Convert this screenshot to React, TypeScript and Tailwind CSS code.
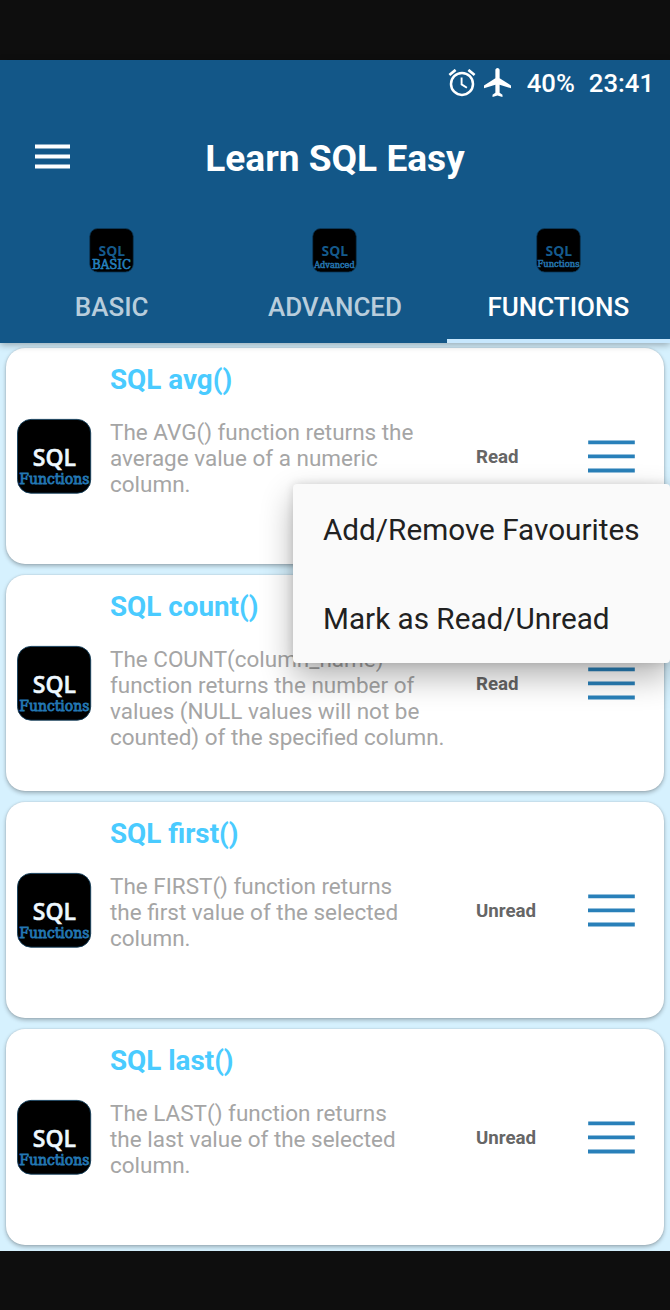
type Topic = { title: string; lines: string[]; status: 'Read' | 'Unread' };

const topics: Topic[] = [
  {
    title: 'SQL avg()',
    lines: ['The AVG() function returns the', 'average value of a numeric', 'column.'],
    status: 'Read',
  },
  {
    title: 'SQL count()',
    lines: [
      'The COUNT(column_name)',
      'function returns the number of',
      'values (NULL values will not be',
      'counted) of the specified column.',
    ],
    status: 'Read',
  },
  {
    title: 'SQL first()',
    lines: ['The FIRST() function returns', 'the first value of the selected', 'column.'],
    status: 'Unread',
  },
  {
    title: 'SQL last()',
    lines: ['The LAST() function returns', 'the last value of the selected', 'column.'],
    status: 'Unread',
  },
];

const tabs = [
  { label: 'BASIC', badge: 'BASIC', size: 12.4, width: 39, x: 3, y: 41, fill: '#2580bd', active: false },
  { label: 'ADVANCED', badge: 'Advanced', size: 8.6, width: 40.5, x: 2.2, y: 39.6, fill: '#2370a8', active: false },
  { label: 'FUNCTIONS', badge: 'Functions', size: 8.8, width: 42, x: 1.5, y: 38.8, fill: '#2370a8', active: true },
];

function AlarmIcon() {
  return (
    <svg className="h-7 w-7" viewBox="0 0 28 28" fill="none" stroke="white">
      <circle cx="14" cy="14.9" r="11" strokeWidth="2.5" />
      <path d="M13.6 8.4v7l5.3 3.4" strokeWidth="1.9" />
      <path d="M1.4 6 7.6 0.9M26.6 6 20.4 0.9" strokeWidth="2.7" />
    </svg>
  );
}

function PlaneIcon() {
  return (
    <svg className="-mt-px h-[29px] w-[27px]" viewBox="2 2 19 20" preserveAspectRatio="none" fill="white">
      <path d="M21 16v-2l-8-5V3.5c0-.83-.67-1.5-1.5-1.5S10 2.67 10 3.5V9l-8 5v2l8-2.5V19l-2 1.5V22l3.5-1 3.5 1v-1.5L13 19v-5.5l8 2.5z" />
    </svg>
  );
}

function TabBadge({ tab }: { tab: (typeof tabs)[number] }) {
  return (
    <svg className="h-[45px] w-[45px] overflow-visible" viewBox="0 0 45 45">
      <rect x="0.7" y="0.5" width="43.6" height="43.6" rx="8" fill="black" stroke="#0b3a5c" strokeWidth="0.8" />
      <text x="9.6" y="28" fontFamily="Open Sans" fontWeight="700" fontSize="14.4" fill="#155a8c" textLength="26.5" lengthAdjust="spacingAndGlyphs">
        SQL
      </text>
      <text x={tab.x} y={tab.y} fontFamily="DejaVu Serif" fontSize={tab.size} fill={tab.fill} stroke={tab.fill} strokeWidth="0.6" textLength={tab.width} lengthAdjust="spacingAndGlyphs">
        {tab.badge}
      </text>
    </svg>
  );
}

function TopicBadge() {
  return (
    <svg className="h-[75px] w-[75px] shrink-0 overflow-visible" viewBox="0 0 75 75">
      <rect x="0.5" y="0.4" width="73.2" height="73.8" rx="13.5" fill="black" stroke="#123f5e" strokeWidth="0.9" />
      <text x="15.8" y="46.6" fontFamily="Open Sans" fontWeight="600" fontSize="24" fill="#eef8ff" stroke="#eef8ff" strokeWidth="0.55" textLength="43.2" lengthAdjust="spacingAndGlyphs">
        SQL
      </text>
      <text x="2.2" y="64.6" fontFamily="DejaVu Serif" fontSize="14.2" fill="#2377b3" stroke="#2377b3" strokeWidth="0.8" textLength="70.2" lengthAdjust="spacingAndGlyphs">
        Functions
      </text>
    </svg>
  );
}

function TopicCard({ topic }: { topic: Topic }) {
  return (
    <article className="flex h-[216px] items-center rounded-[19px] bg-white pl-[11px] shadow-[0_2px_4px_rgba(0,0,0,0.28),0_0_2px_rgba(0,0,0,0.14)]">
      <TopicBadge />
      <div className="ml-[18px] h-full w-[366px] shrink-0 pt-4">
        <h2 className="text-[27.8px] leading-8 font-bold text-[#4acbff]">{topic.title}</h2>
        <p className="mt-[23px] text-[22.47px] leading-[26px] whitespace-nowrap text-[#a5a5a5]">
          {topic.lines.map((line) => (
            <span className="block" key={line}>
              {line}
            </span>
          ))}
        </p>
      </div>
      <span className="mt-0.5 w-28 text-[18.7px] leading-6 font-bold text-[#666]">{topic.status}</span>
      <svg className="h-[34px] w-[47px]" viewBox="0 0 47 34">
        <path d="M0.2 3.3h46.6M0 17.4h46.8M0 31.5h46.8" stroke="#2980b9" strokeWidth="3.8" />
      </svg>
    </article>
  );
}

export default function App() {
  return (
    <div className="relative flex h-[1310px] w-[670px] flex-col overflow-hidden bg-[#0e0e0e] pt-[60px] font-['Roboto',sans-serif]">
      <header className="relative z-10 flex h-[283px] shrink-0 flex-col bg-[#135788] text-white shadow-[0_2px_7px_rgba(0,0,0,0.3)]">
        <div className="flex h-[46px] items-center justify-end pr-4 text-[26px] font-medium">
          <AlarmIcon />
          <span className="ml-2 flex">
            <PlaneIcon />
          </span>
          <span className="ml-4 text-[25.7px]">40%</span>
          <span className="ml-3.5 text-[25.7px]">23:41</span>
        </div>
        <div className="grid h-[104px] grid-cols-[1fr_auto_1fr] items-center">
          <svg className="ml-[35px] h-[25px] w-[35px] -translate-y-0.5" viewBox="0 0 35 25">
            <path d="M0 2.5h35M0 12.5h35M0 22.5h35" stroke="white" strokeWidth="4" />
          </svg>
          <h1 className="pt-0.5 text-[37.1px] leading-[44px] font-bold">Learn SQL Easy</h1>
        </div>
        <nav className="grid flex-1 grid-cols-3">
          {tabs.map((tab) => (
            <div
              key={tab.label}
              className={
                tab.active
                  ? 'flex flex-col items-center border-b-4 border-[#c7e7fd] pt-[18px] text-white'
                  : 'flex flex-col items-center border-b-4 border-transparent pt-[18px] text-[#b8cddc]'
              }
            >
              <TabBadge tab={tab} />
              <span className="mt-[18px] text-[26px] leading-8 font-medium">{tab.label}</span>
            </div>
          ))}
        </nav>
      </header>
      <main className="flex h-[908px] shrink-0 flex-col gap-[11px] overflow-hidden bg-[#d6f1fe] px-1.5 pt-[5px]">
        {topics.map((topic) => (
          <TopicCard key={topic.title} topic={topic} />
        ))}
      </main>
      <div className="absolute top-[484px] left-[293px] z-20 flex h-[179px] w-[377px] flex-col rounded-[4px] bg-[#fafafa] px-[30px] pt-px text-[29.7px] text-[#212121] shadow-[0_14px_32px_rgba(0,0,0,0.3),0_0_10px_rgba(0,0,0,0.14)]">
        <div className="flex h-[91px] items-center whitespace-nowrap">Add/Remove Favourites</div>
        <div className="flex h-[87px] items-center whitespace-nowrap">Mark as Read/Unread</div>
      </div>
    </div>
  );
}
